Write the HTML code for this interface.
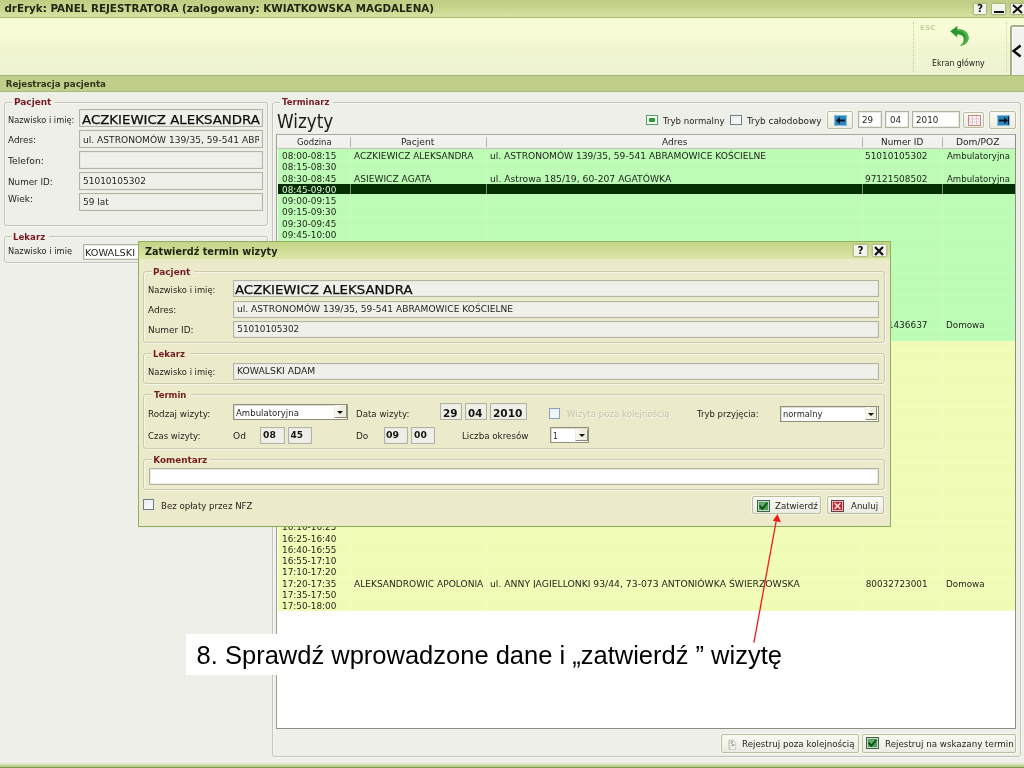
<!DOCTYPE html>
<html lang="pl"><head>
<meta charset="utf-8">
<title>drEryk: PANEL REJESTRATORA</title>
<style>
*{box-sizing:border-box;margin:0;padding:0}
html,body{width:1024px;height:768px;overflow:hidden;background:#eeefe9}
body{position:relative;will-change:transform;font-family:"DejaVu Sans","Liberation Sans",sans-serif;font-size:8.85px;color:#1e1e1a;line-height:1}
.a{position:absolute;white-space:pre}
.b{font-weight:bold}
/* title */
#title{left:0;top:0;width:1024px;height:17px;background:linear-gradient(#bfcd83,#c6d48b 40%,#d2de9b 85%,#d8e3a2)}
#title .tt{font-size:10.35px;font-weight:bold;color:#1d2410}
.wb{position:absolute;top:2.8px;height:12.4px;background:#f3f5ea;border:1px solid #a9b884;border-radius:1.5px;box-shadow:0 0 0 .5px rgba(170,185,130,.6)}
/* toolbar */
#tool{left:0;top:17px;width:1024px;height:59px;background:linear-gradient(#f6fbd2,#f9fdd8 14%,#f1f6d1 55%,#edf1d1);border-top:1px solid #aab878}
#sect{left:0;top:75px;width:1024px;height:17px;background:#bfce88;border-top:1.5px solid #a3b172;border-bottom:1px solid #adba7e}
#sect span{font-size:8.7px;font-weight:bold;color:#2c3518}
#bottom{left:0;top:763px;width:1024px;height:5px;background:linear-gradient(#e6eed4,#cadba4 40%,#b3ca84 72%,#7f9a4f 90%)}
/* group boxes */
.grp{position:absolute;border:1px solid #c4c5b8;border-radius:3px;box-shadow:inset 1px 1px 0 rgba(255,255,255,.55),1px 1px 0 rgba(255,255,255,.55)}
.leg{position:absolute;background:#eeefe9}
.lt{font-weight:bold;color:#741a20}
.fld{position:absolute;background:#f0f0eb;border:1px solid #b2b4a3;box-shadow:inset 0 0 0 1px #eaeae3;overflow:hidden;white-space:pre}
.big{font-size:12.4px;color:#0c0c0c;-webkit-text-stroke:.25px #0c0c0c}
.wf{background:#fff}
/* table */
#tbl{left:276px;top:133.5px;width:740px;height:595.5px;background:#fff;border:1px solid;border-color:#a8a99c #8c8d84 #8c8d84 #a0a196;overflow:hidden}
#th{position:absolute;left:0;top:0;width:100%;height:14.5px;background:linear-gradient(#f4f4f2,#efefec);border-bottom:1.5px solid #c3c3ba}
#th i{position:absolute;top:2px;width:1.3px;height:10.5px;background:#b3b3aa}
.r{position:absolute;left:1px;width:736.6px;height:11.25px;white-space:pre}
.g{background:#bcfcb5;box-shadow:inset 0 -1px 0 #c2fdbb}
.y{background:#f0fcb6;box-shadow:inset 0 -1px 0 #f3fdbf}
.sel{background:#042f03;color:#e8f5e0;height:9.6px;margin-top:0.95px}
.vl{position:absolute;top:16px;width:1px;height:461px;background:rgba(255,255,255,.2)}
/* buttons */
.btn{position:absolute;background:linear-gradient(#fafaf4,#ecece2);border:1px solid #b9bf9d;border-radius:2px;box-shadow:0 0 0 1px rgba(255,255,255,.5)}
.cb{position:absolute;background:linear-gradient(135deg,#e9f0f0,#f6f9f9);border:1px solid #6a8088}
/* dialog */
#dlg{left:138px;top:240.5px;width:753px;height:286px;background:#ebebcc;border:1px solid #90ae5e;border-bottom:1.5px solid #8aaa56}
#dlg .grp{border-color:#cccbb0}
#dlg .leg{background:#ebebcc}
#dtitle{position:absolute;left:0;top:0;width:100%;height:18px;background:linear-gradient(#c4d487,#cfdc96 50%,#dde7a9);border-bottom:1px solid #e6ecc0}
.sel2{position:absolute;background:#fff;border:1px solid #8f8f7a;box-shadow:inset 1px 1px 0 #dcdcd0}
.dd{position:absolute;right:.6px;top:.4px;bottom:.6px;width:12.6px;background:linear-gradient(90deg,#fafaf2,#eeedde 60%);border:1px solid;border-color:transparent #8a8a76 #8a8a76 transparent}
.dd:after{content:"";position:absolute;left:2.4px;top:4.8px;border:3px solid transparent;border-top:3.2px solid #111;border-bottom:none}
.nb{font-weight:bold;font-size:10px;color:#15150f}.nt{font-weight:bold;font-size:9px;color:#15150f}
</style>
</head>
<body>

<!-- ===== title bar ===== -->
<div id="title" class="a">
  <span class="tt" style="position: absolute; white-space: pre; left: 4.4px; top: 3.1px;">drEryk: PANEL REJESTRATORA (zalogowany: KWIATKOWSKA MAGDALENA)</span>
  <div class="wb" style="left:972.8px;width:14.4px"><span class="a b" style="left:3.3px;top:-0.4px;font-size:10.5px;color:#111">?</span></div>
  <div class="wb" style="left:991.3px;width:14.6px"><span class="a" style="left:1.8px;top:7.2px;width:10px;height:2.2px;background:#111"></span></div>
  <div class="wb" style="left:1010.2px;width:15px"><svg class="a" style="left:1.2px;top:0.6px" width="11" height="10" viewBox="0 0 11 10"><path d="M1 1L10 9M10 1L1 9" stroke="#111" stroke-width="2"></path></svg></div>
</div>

<!-- ===== toolbar ===== -->
<div id="tool" class="a">
  <div class="a" style="left:912.6px;top:3.5px;width:0;height:50px;border-left:1px dotted #c3cc9c"></div>
  <div class="a" style="left:1005.6px;top:3.5px;width:0;height:50px;border-left:1px dotted #ccd3a8"></div>
  <span class="b" style="font-size: 6.7px; color: rgb(198, 207, 159); position: absolute; white-space: pre; left: 919.5px; top: 6.8px; transform: scaleX(1.084); transform-origin: 0px 0px;">ESC</span>
  <svg class="a" style="left:948.3px;top:6.8px" width="24" height="23" viewBox="0 0 24 23">
    <path d="M2.2 6.2 L9.6 0.8 L9.2 4.2 C15 3.6 20.4 6.8 20.6 12.6 C20.7 17 17.2 20.4 11.6 21 C15 18.6 16.4 16 15.6 13 C14.8 10.2 12.2 9.2 9 9.6 L9.4 12.6 Z" fill="#2a9632"></path>
    <path d="M9.2 4.2 C15 3.6 20.4 6.8 20.6 12.6 C20.7 17 17.2 20.4 11.6 21 C16.6 18.2 18.4 14.4 17.4 11 C16.4 7.6 13 5.6 9.2 6 Z" fill="#58b848" opacity=".8"></path>
  </svg>
  <span style="color: rgb(35, 35, 29); position: absolute; white-space: pre; left: 932.4px; top: 41.3px; transform: scaleX(0.881); transform-origin: 0px 0px;">Ekran główny</span>
  <div class="a" style="left:1010px;top:7px;width:16px;height:53px;background:#f2f2ee;border:2px solid #a8ae8e;border-radius:3px 0 0 0;box-shadow:inset 1px 1px 0 #fff"></div>
  <svg class="a" style="left:1011.4px;top:26.4px" width="11" height="14" viewBox="0 0 11 14"><path d="M9.6 1.4L2.6 7L9.6 12.6" fill="none" stroke="#0c0c0c" stroke-width="2.5"></path></svg>
</div>

<div id="sect" class="a"><span style="position: absolute; white-space: pre; left: 5.7px; top: 3.5px;">Rejestracja pacjenta</span></div>

<!-- ===== left column ===== -->
<div class="grp" style="left:3.5px;top:101.6px;width:264px;height:124.4px"></div>
<div class="leg" style="left:11.5px;top:97px;width:42px;height:10px"></div>
<span class="lt" style="position: absolute; white-space: pre; left: 13.8px; top: 98.4px; transform: scaleX(1.01); transform-origin: 0px 0px;">Pacjent</span>
<span style="position: absolute; white-space: pre; left: 7.5px; top: 115.7px; transform: scaleX(0.931); transform-origin: 0px 0px;">Nazwisko i imię:</span>
<span style="position: absolute; white-space: pre; left: 7.5px; top: 136.4px; transform: scaleX(1.004); transform-origin: 0px 0px;">Adres:</span>
<span style="position: absolute; white-space: pre; left: 8.1px; top: 157.2px; transform: scaleX(1.048); transform-origin: 0px 0px;">Telefon:</span>
<span style="position: absolute; white-space: pre; left: 7.5px; top: 177.8px; transform: scaleX(0.993); transform-origin: 0px 0px;">Numer ID:</span>
<span style="position: absolute; white-space: pre; left: 7.5px; top: 194.9px; transform: scaleX(1.022); transform-origin: 0px 0px;">Wiek:</span>
<div class="fld" style="left:79.3px;top:108.9px;width:183.7px;height:18.6px"><span class="big" style="position: absolute; white-space: pre; left: 1.8px; top: 3.71px; transform: scaleX(1.076); transform-origin: 0px 0px;">ACZKIEWICZ ALEKSANDRA</span></div>
<div class="fld" style="left:79.3px;top:130.4px;width:183.7px;height:18px"><div class="a" style="left:0;top:0;width:178.3px;height:17px;overflow:hidden"><span style="position: absolute; white-space: pre; left: 2.8px; top: 4.31px; transform: scaleX(1.029); transform-origin: 0px 0px;">ul. ASTRONOMÓW 139/35, 59-541 ABRAMOWICE KOŚCIELNE</span></div></div>
<div class="fld" style="left:79.3px;top:151.3px;width:183.7px;height:18.2px"></div>
<div class="fld" style="left:79.3px;top:172.4px;width:183.7px;height:18px"><span style="position: absolute; white-space: pre; left: 2.8px; top: 3.31px; transform: scaleX(1.016); transform-origin: 0px 0px;">51010105302</span></div>
<div class="fld" style="left:79.3px;top:193.3px;width:183.7px;height:18.1px"><span style="position: absolute; white-space: pre; left: 2.8px; top: 3.3px; transform: scaleX(1.015); transform-origin: 0px 0px;">59 lat</span></div>

<div class="grp" style="left:3.5px;top:235.7px;width:264px;height:27.8px"></div>
<div class="leg" style="left:11.5px;top:231px;width:37px;height:10px"></div>
<span class="lt" style="position: absolute; white-space: pre; left: 13.4px; top: 232.8px; transform: scaleX(0.976); transform-origin: 0px 0px;">Lekarz</span>
<div class="a" style="left:0;top:240px;width:80px;height:15.2px;overflow:hidden"><span style="position: absolute; white-space: pre; left: 7.5px; top: 6.5px; transform: scaleX(0.939); transform-origin: 0px 0px;">Nazwisko i imię</span></div>
<div class="fld wf" style="left:83px;top:243.9px;width:180px;height:16.3px"><span style="font-size: 9.2px; position: absolute; white-space: pre; left: 1.2px; top: 3.31px; transform: scaleX(1.057); transform-origin: 0px 0px;">KOWALSKI ADAM</span></div>

<!-- ===== Terminarz ===== -->
<div class="grp" style="left:272.3px;top:101.8px;width:748.7px;height:655.7px"></div>
<div class="leg" style="left:280px;top:97px;width:52.5px;height:10px"></div>
<span class="lt" style="position: absolute; white-space: pre; left: 282.4px; top: 98.4px; transform: scaleX(0.964); transform-origin: 0px 0px;">Terminarz</span>
<span style="font-family: &quot;DejaVu Sans Condensed&quot;, &quot;DejaVu Sans&quot;, sans-serif; font-size: 19px; color: rgb(28, 28, 24); position: absolute; white-space: pre; left: 276.5px; top: 112.4px; transform: scaleX(0.985); transform-origin: 0px 0px;">Wizyty</span>

<div class="cb" style="left:646.2px;top:114.7px;width:11.5px;height:10.5px;border-color:#5f9a6c;background:#f6faf4"><i class="a" style="left:2.2px;top:2.1px;width:5.2px;height:4.6px;background:#2f9c3c"></i></div>
<span style="position: absolute; white-space: pre; left: 662.7px; top: 116.5px; transform: scaleX(0.973); transform-origin: 0px 0px;">Tryb normalny</span>
<div class="cb" style="left:730.3px;top:114.7px;width:11.7px;height:10.5px"></div>
<span style="position: absolute; white-space: pre; left: 747px; top: 116.5px; transform: scaleX(1.005); transform-origin: 0px 0px;">Tryb całodobowy</span>

<div class="btn" style="left:827px;top:111px;width:26px;height:18px"><svg class="a" style="left:6px;top:3px" width="13" height="11" viewBox="0 0 13 11"><rect width="13" height="11" fill="#2f86b8"></rect><rect x=".5" y=".5" width="12" height="10" fill="none" stroke="#7fc0de"></rect><path d="M2 5.5L6 2V4.4H11V6.6H6V9Z" fill="#0a1420"></path></svg></div>
<div class="fld wf" style="left:857.5px;top:111.3px;width:24px;height:16.4px"><span style="position: absolute; white-space: pre; left: 3.7px; top: 3.9px; transform: scaleX(0.985); transform-origin: 0px 0px;">29</span></div>
<div class="fld wf" style="left:885.3px;top:111.3px;width:23.5px;height:16.4px"><span style="position: absolute; white-space: pre; left: 3.4px; top: 3.9px; transform: scaleX(0.985); transform-origin: 0px 0px;">04</span></div>
<div class="fld wf" style="left:912.2px;top:111.3px;width:48px;height:16.4px"><span style="position: absolute; white-space: pre; left: 3.31px; top: 3.9px; transform: scaleX(0.99); transform-origin: 0px 0px;">2010</span></div>
<div class="btn" style="left:962.5px;top:112px;width:21.5px;height:15.5px"><svg class="a" style="left:4px;top:2px" width="13" height="11" viewBox="0 0 13 11"><rect x=".5" y=".5" width="12" height="10" fill="#faf4f2" stroke="#cc8088"></rect><path d="M4.5 1V10M8.5 1V10M1 4H12M1 7H12" stroke="#d4aab0" stroke-width=".8" stroke-dasharray="1.2 .6"></path></svg></div>
<div class="btn" style="left:988.5px;top:111px;width:27px;height:18px"><svg class="a" style="left:7px;top:3px" width="13" height="11" viewBox="0 0 13 11"><rect width="13" height="11" fill="#2f86b8"></rect><rect x=".5" y=".5" width="12" height="10" fill="none" stroke="#7fc0de"></rect><path d="M11 5.5L7 2V4.4H2V6.6H7V9Z" fill="#0a1420"></path><path d="M11.4 1.6V9.4" stroke="#0a1420" stroke-width="1.2"></path></svg></div>

<div id="tbl" class="a">
  <div id="th">
    <span style="position: absolute; white-space: pre; left: 19.7px; top: 3.5px; transform: scaleX(0.961); transform-origin: 0px 0px;">Godzina</span>
    <span style="position: absolute; white-space: pre; left: 124px; top: 3.5px; transform: scaleX(1.034); transform-origin: 0px 0px;">Pacjent</span>
    <span style="position: absolute; white-space: pre; left: 384.9px; top: 3.5px; transform: scaleX(1.012); transform-origin: 0px 0px;">Adres</span>
    <span style="position: absolute; white-space: pre; left: 604.1px; top: 3.5px;">Numer ID</span>
    <span style="position: absolute; white-space: pre; left: 679.2px; top: 3.5px; transform: scaleX(1.031); transform-origin: 0px 0px;">Dom/POZ</span>
    <i style="left:72.5px"></i><i style="left:208.5px"></i><i style="left:584.5px"></i><i style="left:665px"></i>
  </div>
<div class="a" style="left:1px;top:14.8px;width:736.6px;height:191.3px;background:#bcfcb5"></div><div class="a" style="left:1px;top:206.05px;width:736.6px;height:270px;background:#f0fcb6"></div>
<div class="r g" style="top:14.80px"><span style="position: absolute; white-space: pre; left: 3.9px; top: 2.8px; transform: scaleX(1.004); transform-origin: 0px 0px;">08:00-08:15</span><span style="position: absolute; white-space: pre; left: 75.5px; top: 2.8px; transform: scaleX(1.011); transform-origin: 0px 0px;">ACZKIEWICZ ALEKSANDRA</span><span style="position: absolute; white-space: pre; left: 212px; top: 2.8px; transform: scaleX(1.029); transform-origin: 0px 0px;">ul. ASTRONOMÓW 139/35, 59-541 ABRAMOWICE KOŚCIELNE</span><span style="position: absolute; white-space: pre; left: 587.4px; top: 2.8px; transform: scaleX(1.01); transform-origin: 0px 0px;">51010105302</span><span style="position: absolute; white-space: pre; left: 668.6px; top: 2.8px; transform: scaleX(0.969); transform-origin: 0px 0px;">Ambulatoryjna</span></div>
<div class="r g" style="top:26.05px"><span style="position: absolute; white-space: pre; left: 3.9px; top: 2.8px; transform: scaleX(1.004); transform-origin: 0px 0px;">08:15-08:30</span></div>
<div class="r g" style="top:37.30px"><span style="position: absolute; white-space: pre; left: 3.9px; top: 2.8px; transform: scaleX(1.004); transform-origin: 0px 0px;">08:30-08:45</span><span style="position: absolute; white-space: pre; left: 75.5px; top: 2.8px; transform: scaleX(1.029); transform-origin: 0px 0px;">ASIEWICZ AGATA</span><span style="position: absolute; white-space: pre; left: 212px; top: 2.8px; transform: scaleX(1.042); transform-origin: 0px 0px;">ul. Astrowa 185/19, 60-207 AGATÓWKA</span><span style="position: absolute; white-space: pre; left: 587.4px; top: 2.8px; transform: scaleX(1.01); transform-origin: 0px 0px;">97121508502</span><span style="position: absolute; white-space: pre; left: 668.6px; top: 2.8px; transform: scaleX(0.969); transform-origin: 0px 0px;">Ambulatoryjna</span></div>
<div class="r sel" style="top:48.55px"><span style="position: absolute; white-space: pre; left: 3.9px; top: 1.87px; transform: scaleX(1.004); transform-origin: 0px 0px;">08:45-09:00</span></div>
<div class="r g" style="top:59.80px"><span style="position: absolute; white-space: pre; left: 3.9px; top: 2.8px; transform: scaleX(1.004); transform-origin: 0px 0px;">09:00-09:15</span></div>
<div class="r g" style="top:71.05px"><span style="position: absolute; white-space: pre; left: 3.9px; top: 2.8px; transform: scaleX(1.004); transform-origin: 0px 0px;">09:15-09:30</span></div>
<div class="r g" style="top:82.30px"><span style="position: absolute; white-space: pre; left: 3.9px; top: 2.8px; transform: scaleX(1.004); transform-origin: 0px 0px;">09:30-09:45</span></div>
<div class="r g" style="top:93.55px"><span style="position: absolute; white-space: pre; left: 3.9px; top: 2.8px; transform: scaleX(1.004); transform-origin: 0px 0px;">09:45-10:00</span></div>
<div class="r g" style="top:104.80px"><span style="position: absolute; white-space: pre; left: 3.9px; top: 2.8px; transform: scaleX(1.004); transform-origin: 0px 0px;">10:00-10:15</span></div>
<div class="r g" style="top:116.05px"><span style="position: absolute; white-space: pre; left: 3.9px; top: 2.8px; transform: scaleX(1.004); transform-origin: 0px 0px;">10:15-10:30</span></div>
<div class="r g" style="top:127.30px"><span style="position: absolute; white-space: pre; left: 3.9px; top: 2.8px; transform: scaleX(1.004); transform-origin: 0px 0px;">10:30-10:45</span></div>
<div class="r g" style="top:138.55px"><span style="position: absolute; white-space: pre; left: 3.9px; top: 2.8px; transform: scaleX(1.004); transform-origin: 0px 0px;">10:45-11:00</span></div>
<div class="r g" style="top:149.80px"><span style="position: absolute; white-space: pre; left: 3.9px; top: 2.8px; transform: scaleX(1.004); transform-origin: 0px 0px;">11:00-11:15</span></div>
<div class="r g" style="top:161.05px"><span style="position: absolute; white-space: pre; left: 3.9px; top: 2.8px; transform: scaleX(1.004); transform-origin: 0px 0px;">11:15-11:30</span></div>
<div class="r g" style="top:172.30px"><span style="position: absolute; white-space: pre; left: 3.9px; top: 2.8px; transform: scaleX(1.004); transform-origin: 0px 0px;">11:30-11:45</span></div>
<div class="r g" style="top:183.55px"><span style="position: absolute; white-space: pre; left: 3.9px; top: 2.8px; transform: scaleX(1.004); transform-origin: 0px 0px;">11:45-12:00</span><span style="position: absolute; white-space: pre; left: 75.5px; top: 2.8px; transform: scaleX(1.011); transform-origin: 0px 0px;">ADAMCZYK ANNA</span><span style="position: absolute; white-space: pre; left: 212px; top: 2.8px; transform: scaleX(1.032); transform-origin: 0px 0px;">ul. AKACJOWA 12/3, 61-436 ADAMOWO</span><span style="position: absolute; white-space: pre; left: 587.4px; top: 2.8px; transform: scaleX(1.01); transform-origin: 0px 0px;">88101436637</span><span style="position: absolute; white-space: pre; left: 668.1px; top: 2.8px; transform: scaleX(0.995); transform-origin: 0px 0px;">Domowa</span></div>
<div class="r g" style="top:194.80px"><span style="position: absolute; white-space: pre; left: 3.9px; top: 2.8px; transform: scaleX(1.004); transform-origin: 0px 0px;">12:00-12:15</span></div>
<div class="r y" style="top:206.05px"><span style="position: absolute; white-space: pre; left: 3.9px; top: 2.8px; transform: scaleX(1.004); transform-origin: 0px 0px;">12:15-12:30</span></div>
<div class="r y" style="top:217.30px"><span style="position: absolute; white-space: pre; left: 3.9px; top: 2.8px; transform: scaleX(1.004); transform-origin: 0px 0px;">12:30-12:45</span></div>
<div class="r y" style="top:228.55px"><span style="position: absolute; white-space: pre; left: 3.9px; top: 2.8px; transform: scaleX(1.004); transform-origin: 0px 0px;">12:45-13:00</span></div>
<div class="r y" style="top:239.80px"><span style="position: absolute; white-space: pre; left: 3.9px; top: 2.8px; transform: scaleX(1.004); transform-origin: 0px 0px;">13:00-13:15</span></div>
<div class="r y" style="top:251.05px"><span style="position: absolute; white-space: pre; left: 3.9px; top: 2.8px; transform: scaleX(1.004); transform-origin: 0px 0px;">13:15-13:30</span></div>
<div class="r y" style="top:262.30px"><span style="position: absolute; white-space: pre; left: 3.9px; top: 2.8px; transform: scaleX(1.004); transform-origin: 0px 0px;">13:30-13:45</span></div>
<div class="r y" style="top:273.55px"><span style="position: absolute; white-space: pre; left: 3.9px; top: 2.8px; transform: scaleX(1.004); transform-origin: 0px 0px;">13:45-14:00</span></div>
<div class="r y" style="top:284.80px"><span style="position: absolute; white-space: pre; left: 3.9px; top: 2.8px; transform: scaleX(1.004); transform-origin: 0px 0px;">14:00-14:15</span></div>
<div class="r y" style="top:296.05px"><span style="position: absolute; white-space: pre; left: 3.9px; top: 2.8px; transform: scaleX(1.004); transform-origin: 0px 0px;">14:15-14:30</span></div>
<div class="r y" style="top:307.30px"><span style="position: absolute; white-space: pre; left: 3.9px; top: 2.8px; transform: scaleX(1.004); transform-origin: 0px 0px;">14:30-14:45</span></div>
<div class="r y" style="top:318.55px"><span style="position: absolute; white-space: pre; left: 3.9px; top: 2.8px; transform: scaleX(1.004); transform-origin: 0px 0px;">14:45-15:00</span></div>
<div class="r y" style="top:329.80px"><span style="position: absolute; white-space: pre; left: 3.9px; top: 2.8px; transform: scaleX(1.004); transform-origin: 0px 0px;">15:00-15:15</span></div>
<div class="r y" style="top:341.05px"><span style="position: absolute; white-space: pre; left: 3.9px; top: 2.8px; transform: scaleX(1.004); transform-origin: 0px 0px;">15:15-15:30</span></div>
<div class="r y" style="top:352.30px"><span style="position: absolute; white-space: pre; left: 3.9px; top: 2.8px; transform: scaleX(1.004); transform-origin: 0px 0px;">15:30-15:45</span></div>
<div class="r y" style="top:363.55px"><span style="position: absolute; white-space: pre; left: 3.9px; top: 2.8px; transform: scaleX(1.004); transform-origin: 0px 0px;">15:45-16:00</span></div>
<div class="r y" style="top:374.80px"><span style="position: absolute; white-space: pre; left: 3.9px; top: 2.8px; transform: scaleX(1.004); transform-origin: 0px 0px;">16:00-16:15</span></div>
<div class="r y" style="top:386.05px"><span style="position: absolute; white-space: pre; left: 3.9px; top: 2.8px; transform: scaleX(1.004); transform-origin: 0px 0px;">16:10-16:25</span></div>
<div class="r y" style="top:397.30px"><span style="position: absolute; white-space: pre; left: 3.9px; top: 2.8px; transform: scaleX(1.004); transform-origin: 0px 0px;">16:25-16:40</span></div>
<div class="r y" style="top:408.55px"><span style="position: absolute; white-space: pre; left: 3.9px; top: 2.8px; transform: scaleX(1.004); transform-origin: 0px 0px;">16:40-16:55</span></div>
<div class="r y" style="top:419.80px"><span style="position: absolute; white-space: pre; left: 3.9px; top: 2.8px; transform: scaleX(1.004); transform-origin: 0px 0px;">16:55-17:10</span></div>
<div class="r y" style="top:431.05px"><span style="position: absolute; white-space: pre; left: 3.9px; top: 2.8px; transform: scaleX(1.004); transform-origin: 0px 0px;">17:10-17:20</span></div>
<div class="r y" style="top:442.30px"><span style="position: absolute; white-space: pre; left: 3.9px; top: 2.8px; transform: scaleX(1.004); transform-origin: 0px 0px;">17:20-17:35</span><span style="position: absolute; white-space: pre; left: 75.5px; top: 2.8px; transform: scaleX(1.024); transform-origin: 0px 0px;">ALEKSANDROWIC APOLONIA</span><span style="position: absolute; white-space: pre; left: 212px; top: 2.8px; transform: scaleX(1.045); transform-origin: 0px 0px;">ul. ANNY JAGIELLONKI 93/44, 73-073 ANTONIÓWKA ŚWIERZOWSKA</span><span style="position: absolute; white-space: pre; left: 587.7px; top: 2.8px;">80032723001</span><span style="position: absolute; white-space: pre; left: 668.1px; top: 2.8px; transform: scaleX(0.995); transform-origin: 0px 0px;">Domowa</span></div>
<div class="r y" style="top:453.55px"><span style="position: absolute; white-space: pre; left: 3.9px; top: 2.8px; transform: scaleX(1.004); transform-origin: 0px 0px;">17:35-17:50</span></div>
<div class="r y" style="top:464.80px"><span style="position: absolute; white-space: pre; left: 3.9px; top: 2.8px; transform: scaleX(1.004); transform-origin: 0px 0px;">17:50-18:00</span></div>
  <div class="vl" style="left:73px"></div><div class="vl" style="left:209px"></div><div class="vl" style="left:585px"></div><div class="vl" style="left:665px"></div>
  <div class="a" style="left:72.6px;top:49.5px;width:1.3px;height:9.6px;background:#6c9570"></div>
  <div class="a" style="left:208.6px;top:49.5px;width:1.3px;height:9.6px;background:#6c9570"></div>
  <div class="a" style="left:584.6px;top:49.5px;width:1.3px;height:9.6px;background:#6c9570"></div>
  <div class="a" style="left:665px;top:49.5px;width:1.3px;height:9.6px;background:#6c9570"></div>
</div>

<div class="btn" style="left:721px;top:733.5px;width:137.5px;height:19px">
  <svg class="a" style="left:6px;top:4px" width="9" height="12" viewBox="0 0 9 12"><path d="M.8 1.2H5.4L7.6 3.4V10.6H.8Z" fill="#f1f1ee" stroke="#c4c4bc" stroke-width=".8"></path><path d="M1 2.2H4.6M1 4.6H4M1 7H3.6M1 9.2H3" stroke="#9a9a94" stroke-width=".9" stroke-dasharray="1.2 .8"></path><path d="M3.6 3.2H5M4 6H6.4" stroke="#5a5a58" stroke-width=".9"></path></svg>
  <span style="position: absolute; white-space: pre; left: 19.9px; top: 5.3px; transform: scaleX(0.983); transform-origin: 0px 0px;">Rejestruj poza kolejnością</span>
</div>
<div class="btn" style="left:862px;top:733.5px;width:154px;height:19px">
  <svg class="a" style="left:3.4px;top:2.6px" width="13" height="12" viewBox="0 0 13 12"><rect x=".5" y=".5" width="12" height="11" fill="#cde5cd" stroke="#41614d"></rect><rect x="1.9" y="1.9" width="9.2" height="8.2" fill="#4c9e57"></rect><rect x="3" y="2.6" width="6" height="4" fill="#69b471" opacity=".7"></rect><path d="M2.6 5.6L5.4 8.8L10.2 3" fill="none" stroke="#0b4713" stroke-width="1.7"></path></svg>
  <span style="position: absolute; white-space: pre; left: 22.2px; top: 5.3px; transform: scaleX(0.987); transform-origin: 0px 0px;">Rejestruj na wskazany termin</span>
</div>

<!-- ===== annotation ===== -->
<div class="a" style="left:185.5px;top:634px;width:610px;height:40.5px;background:#fff"></div>
<span style="font-family: &quot;Liberation Sans&quot;, sans-serif; font-size: 25.5px; color: rgb(0, 0, 0); position: absolute; white-space: pre; left: 196.6px; top: 642.5px;">8. Sprawdź wprowadzone dane i „zatwierdź ” wizytę</span>

<!-- ===== dialog ===== -->
<div id="dlg" class="a">
  <div id="dtitle"></div>
  <span class="b" style="font-size: 10px; color: rgb(28, 34, 16); position: absolute; white-space: pre; left: 5.5px; top: 5.2px; transform: scaleX(0.968); transform-origin: 0px 0px;">Zatwierdź termin wizyty</span>
  <div class="wb" style="left:714px;top:2.8px;width:14.6px;height:13px;border-color:#b6bf8c"><span class="a b" style="left:3.4px;top:0;font-size:10.5px;color:#111">?</span></div>
  <div class="wb" style="left:732.6px;top:2.8px;width:15px;height:13px;border-color:#b6bf8c"><svg class="a" style="left:1.5px;top:1px" width="10" height="10" viewBox="0 0 10 10"><path d="M1 1L9 9M9 1L1 9" stroke="#111" stroke-width="2.3"></path></svg></div>

  <!-- Pacjent -->
  <div class="grp" style="left:4.3px;top:29.7px;width:742.2px;height:72px"></div>
  <div class="leg" style="left:12.5px;top:25px;width:42px;height:10px"></div>
  <span class="lt" style="position: absolute; white-space: pre; left: 14.3px; top: 26.7px; transform: scaleX(1.008); transform-origin: 0px 0px;">Pacjent</span>
  <span style="position: absolute; white-space: pre; left: 9.4px; top: 44.4px; transform: scaleX(0.946); transform-origin: 0px 0px;">Nazwisko i imię:</span>
  <span style="position: absolute; white-space: pre; left: 9.4px; top: 64.8px; transform: scaleX(1.015); transform-origin: 0px 0px;">Adres:</span>
  <span style="position: absolute; white-space: pre; left: 9.4px; top: 84.5px; transform: scaleX(1.011); transform-origin: 0px 0px;">Numer ID:</span>
  <div class="fld" style="left:94.3px;top:38.9px;width:646.2px;height:17px"><span class="big" style="font-size: 12px; position: absolute; white-space: pre; left: 1.1px; top: 2.91px; transform: scaleX(1.109); transform-origin: 0px 0px;">ACZKIEWICZ ALEKSANDRA</span></div>
  <div class="fld" style="left:94.3px;top:59.6px;width:646.2px;height:16.6px"><span style="position: absolute; white-space: pre; left: 3px; top: 3.21px; transform: scaleX(1.029); transform-origin: 0px 0px;">ul. ASTRONOMÓW 139/35, 59-541 ABRAMOWICE KOŚCIELNE</span></div>
  <div class="fld" style="left:94.3px;top:79.9px;width:646.2px;height:16.5px"><span style="position: absolute; white-space: pre; left: 3px; top: 3.01px;">51010105302</span></div>

  <!-- Lekarz -->
  <div class="grp" style="left:4.3px;top:111.7px;width:742.2px;height:31.3px"></div>
  <div class="leg" style="left:12.5px;top:107px;width:37px;height:10px"></div>
  <span class="lt" style="position: absolute; white-space: pre; left: 14.3px; top: 108.2px; transform: scaleX(0.967); transform-origin: 0px 0px;">Lekarz</span>
  <span style="position: absolute; white-space: pre; left: 9.4px; top: 126px; transform: scaleX(0.946); transform-origin: 0px 0px;">Nazwisko i imię:</span>
  <div class="fld" style="left:94.3px;top:121.1px;width:646.2px;height:17.2px"><span style="font-size: 9.2px; position: absolute; white-space: pre; left: 3px; top: 2.31px; transform: scaleX(1.008); transform-origin: 0px 0px;">KOWALSKI ADAM</span></div>

  <!-- Termin -->
  <div class="grp" style="left:4.3px;top:152.7px;width:742.2px;height:55px"></div>
  <div class="leg" style="left:12.5px;top:148px;width:39px;height:10px"></div>
  <span class="lt" style="position: absolute; white-space: pre; left: 15.3px; top: 149.8px; transform: scaleX(0.96); transform-origin: 0px 0px;">Termin</span>
  <span style="position: absolute; white-space: pre; left: 9.4px; top: 168.4px; transform: scaleX(0.992); transform-origin: 0px 0px;">Rodzaj wizyty:</span>
  <div class="sel2" style="left:94.3px;top:162px;width:114.8px;height:16px"><span style="position: absolute; white-space: pre; left: 1.6px; top: 4.4px; transform: scaleX(0.968); transform-origin: 0px 0px;">Ambulatoryjna</span><div class="dd"></div></div>
  <span style="position: absolute; white-space: pre; left: 217.4px; top: 168.6px; transform: scaleX(0.979); transform-origin: 0px 0px;">Data wizyty:</span>
  <div class="fld" style="left:301.1px;top:161.7px;width:21.8px;height:17.3px"><span class="nb" style="position: absolute; white-space: pre; left: 1.61px; top: 4.51px; transform: scaleX(1.042); transform-origin: 0px 0px;">29</span></div>
  <div class="fld" style="left:326.1px;top:161.7px;width:21.6px;height:17.3px"><span class="nb" style="position: absolute; white-space: pre; left: 1.61px; top: 4.51px; transform: scaleX(1.027); transform-origin: 0px 0px;">04</span></div>
  <div class="fld" style="left:351.1px;top:161.7px;width:36.6px;height:17.3px"><span class="nb" style="position: absolute; white-space: pre; left: 1.51px; top: 4.51px; transform: scaleX(1.059); transform-origin: 0px 0px;">2010</span></div>
  <div class="cb" style="left:410.2px;top:166.8px;width:11px;height:10.3px;border-color:#8da2b8"></div>
  <span style="color: rgb(195, 194, 172); text-shadow: rgb(248, 248, 236) 0.6px 0.6px 0px; position: absolute; white-space: pre; left: 428px; top: 168.6px; transform: scaleX(0.973); transform-origin: 0px 0px;">Wizyta poza kolejnością</span>
  <span style="position: absolute; white-space: pre; left: 558px; top: 168.2px; transform: scaleX(0.962); transform-origin: 0px 0px;">Tryb przyjęcia:</span>
  <div class="sel2" style="left:640.9px;top:164.2px;width:99px;height:16.2px"><span style="position: absolute; white-space: pre; left: 2.01px; top: 3.81px; transform: scaleX(0.94); transform-origin: 0px 0px;">normalny</span><div class="dd"></div></div>

  <span style="position: absolute; white-space: pre; left: 9.4px; top: 190.5px; transform: scaleX(0.966); transform-origin: 0px 0px;">Czas wizyty:</span>
  <span style="position: absolute; white-space: pre; left: 93.8px; top: 190.5px; transform: scaleX(1.026); transform-origin: 0px 0px;">Od</span>
  <div class="fld" style="left:121.1px;top:185.5px;width:24.8px;height:16.7px"><span class="nt" style="position: absolute; white-space: pre; left: 1.61px; top: 3.1px; transform: scaleX(1.029); transform-origin: 0px 0px;">08</span></div>
  <div class="fld" style="left:149px;top:185.5px;width:23.8px;height:16.7px"><span class="nt" style="position: absolute; white-space: pre; left: 1.4px; top: 3.1px;">45</span></div>
  <span style="position: absolute; white-space: pre; left: 217.4px; top: 190.5px; transform: scaleX(1.005); transform-origin: 0px 0px;">Do</span>
  <div class="fld" style="left:245.1px;top:185.5px;width:23.8px;height:16.7px"><span class="nt" style="position: absolute; white-space: pre; left: 1.21px; top: 3.1px; transform: scaleX(1.045); transform-origin: 0px 0px;">09</span></div>
  <div class="fld" style="left:272.4px;top:185.5px;width:24px;height:16.7px"><span class="nt" style="position: absolute; white-space: pre; left: 1.11px; top: 3.1px; transform: scaleX(1.021); transform-origin: 0px 0px;">00</span></div>
  <span style="position: absolute; white-space: pre; left: 322.5px; top: 190.5px; transform: scaleX(0.985); transform-origin: 0px 0px;">Liczba okresów</span>
  <div class="sel2" style="left:411.2px;top:185.7px;width:39.2px;height:15.8px"><span style="position: absolute; white-space: pre; left: 2.21px; top: 3.81px; transform: scaleX(0.833); transform-origin: 0px 0px;">1</span><div class="dd"></div></div>

  <!-- Komentarz -->
  <div class="grp" style="left:4.3px;top:217.2px;width:742.2px;height:31.7px"></div>
  <div class="leg" style="left:12.5px;top:212.5px;width:58px;height:10px"></div>
  <span class="lt" style="position: absolute; white-space: pre; left: 14.2px; top: 214.1px;">Komentarz</span>
  <div class="fld wf" style="left:10.2px;top:226.9px;width:730.3px;height:16.3px"></div>

  <div class="cb" style="left:4.2px;top:257.8px;width:11.3px;height:10.6px"></div>
  <span style="position: absolute; white-space: pre; left: 21.7px; top: 260.6px; transform: scaleX(0.973); transform-origin: 0px 0px;">Bez opłaty przez NFZ</span>

  <div class="btn" style="left:613.3px;top:254.6px;width:69px;height:18.4px">
    <svg class="a" style="left:3.8px;top:2.7px" width="13" height="12" viewBox="0 0 13 12"><rect x=".5" y=".5" width="12" height="11" fill="#cde5cd" stroke="#41614d"></rect><rect x="1.9" y="1.9" width="9.2" height="8.2" fill="#4c9e57"></rect><rect x="3" y="2.6" width="6" height="4" fill="#69b471" opacity=".7"></rect><path d="M2.6 5.6L5.4 8.8L10.2 3" fill="none" stroke="#0b4713" stroke-width="1.7"></path></svg>
    <span style="position: absolute; white-space: pre; left: 21.4px; top: 5.01px; transform: scaleX(0.974); transform-origin: 0px 0px;">Zatwierdź</span>
  </div>
  <div class="btn" style="left:687.6px;top:254.6px;width:57.8px;height:18.4px">
    <svg class="a" style="left:3.5px;top:2.7px" width="13" height="12" viewBox="0 0 13 12"><rect x=".5" y=".5" width="12" height="11" fill="#f6c6ca" stroke="#5e4048"></rect><rect x="1.9" y="1.9" width="9.2" height="8.2" fill="#bb2530"></rect><path d="M3.6 3.2L9.4 8.8M9.4 3.2L3.6 8.8" stroke="#f8d4cc" stroke-width="1.7"></path></svg>
    <span style="position: absolute; white-space: pre; left: 23.61px; top: 5.01px; transform: scaleX(0.975); transform-origin: 0px 0px;">Anuluj</span>
  </div>
</div>

<!-- red arrow -->
<svg class="a" style="left:740px;top:505px" width="50" height="145" viewBox="740 505 50 145">
  <path d="M753.9 642.6L776.2 521" stroke="#f01a1a" stroke-width="1.3" fill="none"></path>
  <path d="M777.5 514L780.9 522.2L772.8 520.8Z" fill="#f01a1a"></path>
</svg>

<div id="bottom" class="a"></div>


</body></html>
